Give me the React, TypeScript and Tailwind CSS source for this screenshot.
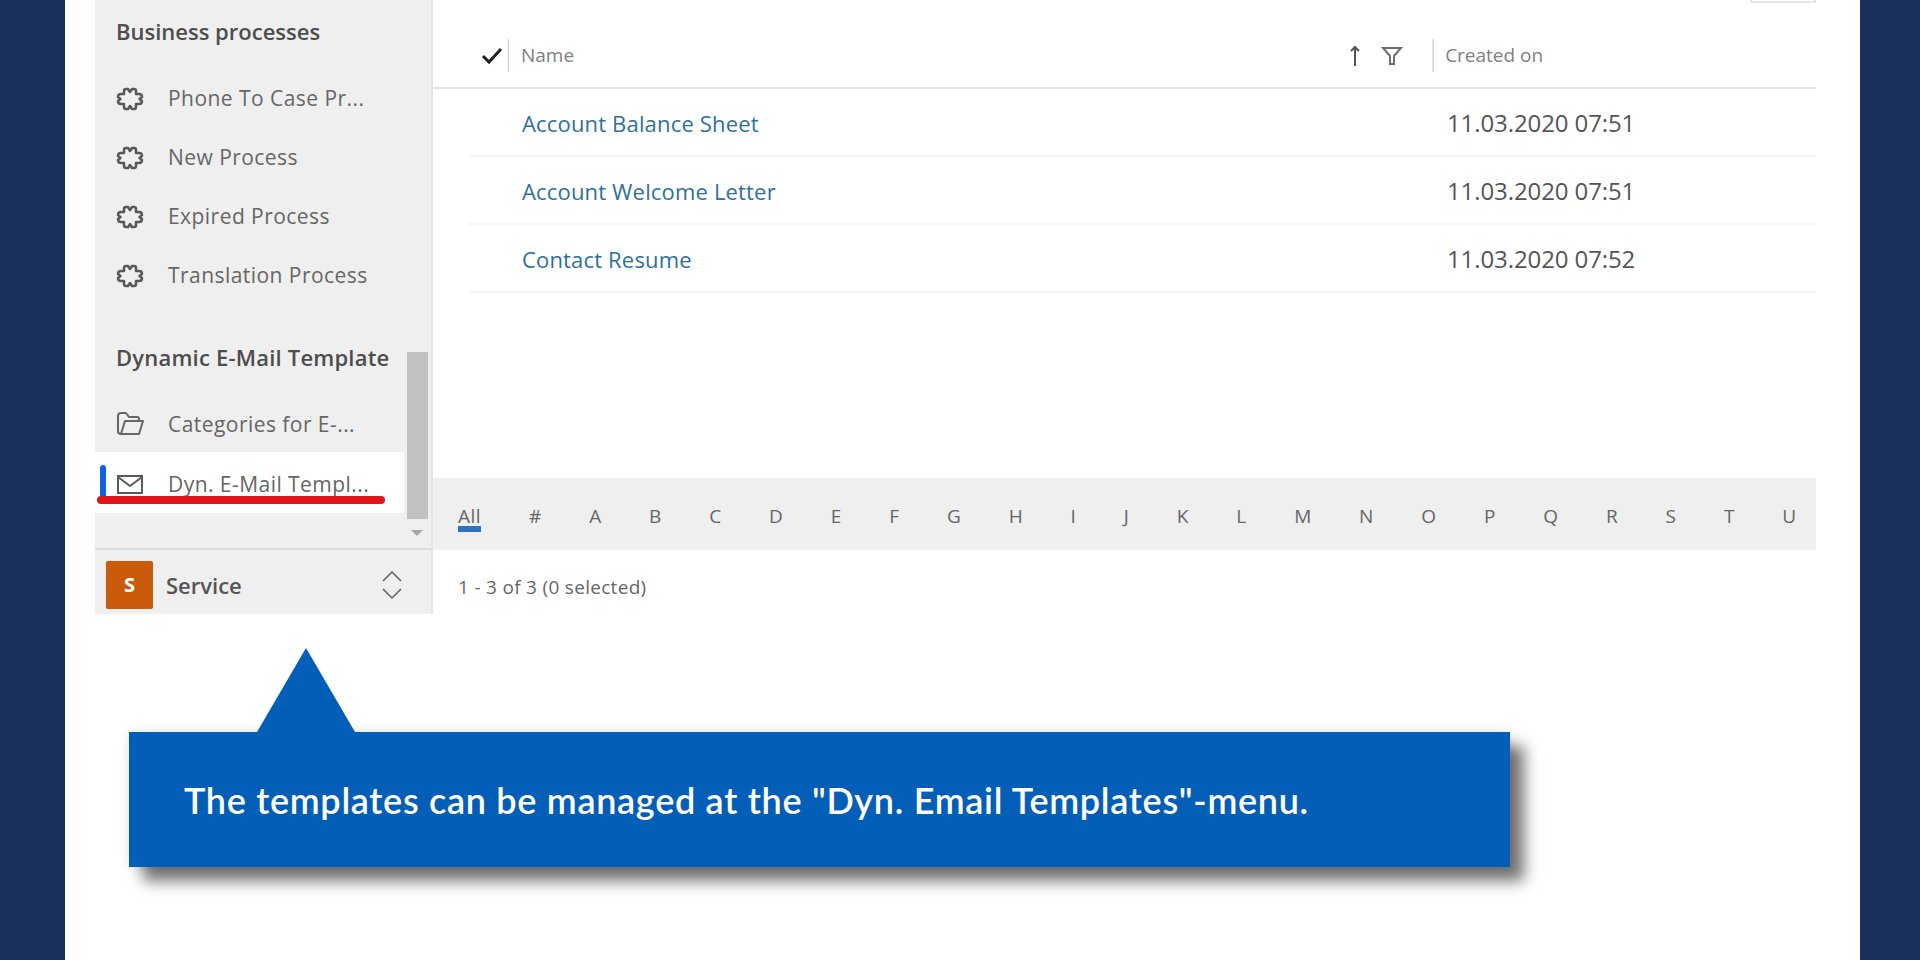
import React from 'react'

const sans = "font-['Open_Sans',sans-serif]"

const PuzzleIcon = () => (
  <svg width="28" height="26" viewBox="0 0 28 26" fill="none" stroke="#585858" strokeWidth="2.500" strokeLinejoin="round" className="shrink-0">
    <path d="M8 8 L8 5 Q8 3 10 3 L12 3 L14 6 L16 3 L18 3 Q20 3 20 5 L20 8 L23 8 Q26 8 26 11 L23.500 13 L26 15 Q26 18 23 18 L20 18 L20 21 Q20 23 18 23 L16 23 L14 20 L12 23 L10 23 Q8 23 8 21 L8 18 L5 18 Q2 18 2 15 L4.500 13 L2 11 Q2 8 5 8 Z" />
  </svg>
)

const FolderIcon = () => (
  <svg width="28" height="26" viewBox="0 0 28 26" fill="none" stroke="#666666" strokeWidth="2" strokeLinejoin="round" className="shrink-0">
    <path d="M5 23 Q2 23 2 20 L2 5 Q2 2 5 2 L10 2 L13 6 L21 6 Q23 6 23 8 L23 10" />
    <path d="M5 23 L9 10 L27 10 L23 23 Z" />
  </svg>
)

const MailIcon = () => (
  <svg width="28" height="22" viewBox="0 0 28 22" fill="none" stroke="#5a5a5a" strokeWidth="2" className="shrink-0">
    <rect x="2" y="3" width="24" height="17" />
    <path d="M2 4 L14 13 L26 4" />
  </svg>
)

const NavRow = ({ label, icon, active, short }: { label: string; icon: React.ReactNode; active?: boolean; short?: boolean }) => (
  <div className={`flex items-center ${active ? 'bg-white h-[61px] pt-[3px]' : short ? 'h-[56px]' : 'h-[59px]'} pl-[21px] mr-[27px]`}>
    <div className="w-[52px]">{icon}</div>
    <span className="text-[21px] leading-none text-[#666] tracking-[0.45px]">{label}</span>
  </div>
)

const letters = ['#', 'A', 'B', 'C', 'D', 'E', 'F', 'G', 'H', 'I', 'J', 'K', 'L', 'M', 'N', 'O', 'P', 'Q', 'R', 'S', 'T', 'U']

const rows = [
  { name: 'Account Balance Sheet', date: '11.03.2020 07:51' },
  { name: 'Account Welcome Letter', date: '11.03.2020 07:51' },
  { name: 'Contact Resume', date: '11.03.2020 07:52' },
]

const App = () => {
  return (
    <div className={`flex w-[1920px] h-[960px] overflow-hidden bg-[#1b2f5b] ${sans}`}>
      <div className="ml-[65px] w-[1795px] h-[960px] bg-white pl-[30px] flex flex-col">
        <div className="flex h-[614px]">
          {/* sidebar */}
          <div className="w-[338px] h-full bg-[#efefef] border-r-2 border-[#e4e4e4] flex flex-col shrink-0">
            <div className="relative h-[548px]">
              <div className="h-[64px] pb-[2px] pl-[21px] flex items-center text-[22px] font-semibold text-[#4d4d4d]">
                Business processes
              </div>
              <div className="mt-[5px]">
                <NavRow label="Phone To Case Pr..." icon={<PuzzleIcon />} />
                <NavRow label="New Process" icon={<PuzzleIcon />} />
                <NavRow label="Expired Process" icon={<PuzzleIcon />} />
                <NavRow label="Translation Process" icon={<PuzzleIcon />} />
              </div>
              <div className="mt-[25px] h-[60px] pb-[5px] pl-[21px] flex items-center text-[22px] font-semibold text-[#4d4d4d] tracking-[0.2px]">
                Dynamic E-Mail Template
              </div>
              <div className="mt-[6px]">
                <NavRow label="Categories for E-..." icon={<FolderIcon />} short />
              </div>
              <NavRow label="Dyn. E-Mail Templ..." icon={<MailIcon />} active />
              {/* scrollbar */}
              <div className="absolute left-[312px] top-[352px] w-[21px] h-[167px] bg-[#c1c1c1]" />
              <div className="absolute left-[316px] top-[530px] w-0 h-0 border-x-[6px] border-x-transparent border-t-[6px] border-t-[#a6a6a6]" />
              {/* active marker and red underline */}
              <div className="absolute left-[5px] top-[465px] w-[6px] h-[32px] rounded-t-[3px] bg-[#0f62e6]" />
              <div className="absolute left-[2px] top-[496px] w-[288px] h-[8px] rounded-full bg-[#e2151b]" />
            </div>
            <div className="flex-1 border-t-2 border-[#dcdcdc] flex items-start pt-[11px] pl-[11px]">
              <div className="w-[47px] h-[48px] rounded-[2px] bg-[#ca5b0a] flex items-center justify-center text-white font-bold text-[20px]">
                S
              </div>
              <span className="ml-[13px] h-[48px] flex items-center text-[22px] font-semibold text-[#555]">Service</span>
              <svg width="22" height="32" viewBox="0 0 22 32" fill="none" stroke="#5f5f5f" strokeWidth="1.500" className="ml-auto mr-[28px] mt-[8px]">
                <path d="M2 12 L11 3 L20 12" />
                <path d="M2 20 L11 29 L20 20" />
              </svg>
            </div>
          </div>

          {/* grid */}
          <div className="w-[1383px] flex flex-col">
            <div className="h-[89px] relative border-b-2 border-[#e3e3e3]">
              <div className="absolute right-0 top-0 w-[66px] h-[3px] border-b-2 border-x-2 border-[#e6e6e6]" />
              <div className="flex items-center h-[33px] mt-[39px]">
                <svg width="22" height="18" viewBox="0 0 22 18" fill="none" stroke="#222" strokeWidth="3" className="ml-[48px]">
                  <path d="M2 9 L8 15 L20 2" />
                </svg>
                <div className="ml-[5px] w-px h-[33px] bg-[#cfcfcf]" />
                <span className="ml-[12px] text-[19px] text-[#808080]">Name</span>
                <svg width="14" height="22" viewBox="0 0 14 22" fill="none" stroke="#555" strokeWidth="2" className="ml-[774px]">
                  <path d="M7 21 L7 2 M3 6 L7 2 L11 6" />
                </svg>
                <svg width="22" height="20" viewBox="0 0 22 20" fill="none" stroke="#707070" strokeWidth="2" className="ml-[19px]">
                  <path d="M2 2 L20 2 L13 10 L13 18 L9 18 L9 10 Z" />
                </svg>
                <div className="ml-[29px] w-[2px] h-[33px] bg-[#e0e0e0]" />
                <span className="ml-[11px] text-[19px] text-[#808080]">Created on</span>
              </div>
            </div>
            <div className="h-[389px]">
              {rows.map((r) => (
                <div key={r.name} className="ml-[35px] h-[68px] pt-[2px] flex items-center border-b-2 border-[#f5f5f5]">
                  <span className="ml-[54px] w-[925px] text-[22px] text-[#2f709f] tracking-[0.17px]">{r.name}</span>
                  <span className="text-[24px] text-[#555] tracking-[-0.1px]">{r.date}</span>
                </div>
              ))}
            </div>
            <div className="h-[72px] pt-[5px] bg-[#efefef] flex items-center pl-[25px] gap-[47.9px] text-[19px] text-[#666] shrink-0">
              <span className="relative tracking-[0.5px]">
                All
                <span className="absolute left-0 right-0 top-[24px] h-[6px] bg-[#2f6fc4]" />
              </span>
              {letters.map((l) => (
                <span key={l}>{l}</span>
              ))}
            </div>
            <div className="pl-[25px] mt-[25px] text-[19px] leading-6 text-[#666] tracking-[0.3px]">1 - 3 of 3 (0 selected)</div>
          </div>
        </div>

        {/* callout */}
        <div className="relative ml-[34px] mt-[118px] w-[1381px] h-[135px] bg-[#035eb8] shadow-[14px_14px_14px_rgba(0,0,0,0.55),0_0_10px_rgba(0,0,0,0.12)] flex items-center pl-[55px]">
          <svg width="98" height="84" viewBox="0 0 98 84" className="absolute left-[128px] top-[-84px]">
            <polygon points="49,0 98,84 0,84" fill="#035eb8" />
          </svg>
          <span className="font-['Lato',sans-serif] font-semibold text-[36px] text-white tracking-[0.7px]">
            The templates can be managed at the "Dyn. Email Templates"-menu.
          </span>
        </div>
      </div>
    </div>
  )
}

export default App
